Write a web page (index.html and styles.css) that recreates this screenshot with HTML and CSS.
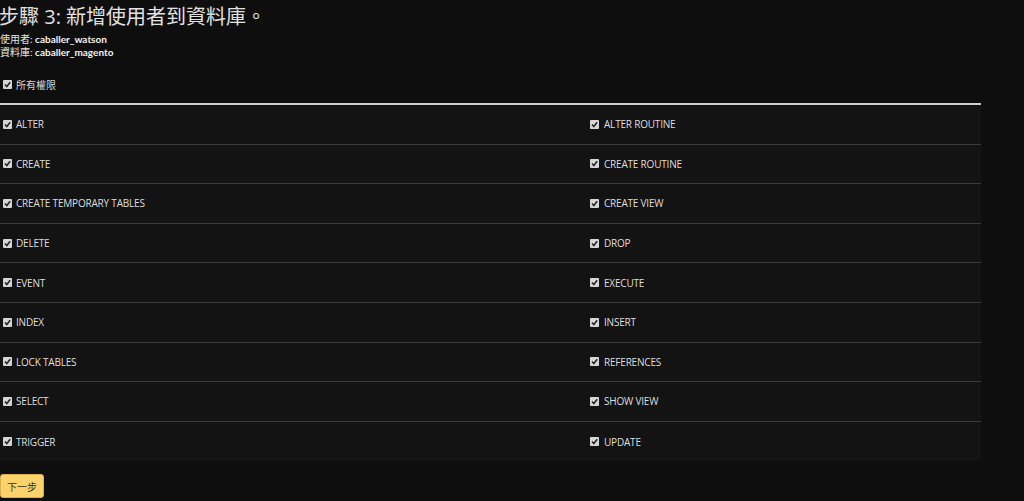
FILE: index.html
```html
<!DOCTYPE html>
<html lang="zh-Hant">
<head>
<meta charset="utf-8">
<title>步驟 3</title>
<link rel="stylesheet" href="styles.css">
</head>
<body>
<div class="page">
  <h1 class="title">步驟 3: 新增使用者到資料庫。</h1>
  <div class="info">
    <div>使用者: <b>caballer_watson</b></div>
    <div>資料庫: <b>caballer_magento</b></div>
  </div>
  <label class="all"><span class="cb"><svg viewBox="0 0 9 9"><rect x="0" y="0" width="9" height="9" rx="1" fill="#d6d6d6"/><path d="M2 4.6 L3.8 6.5 L7.2 2.2" fill="none" stroke="#222" stroke-width="1.5"/></svg></span>所有權限</label>
  <div class="table">
    <div class="row"><div class="cell"><span class="cb"><svg viewBox="0 0 9 9"><rect width="9" height="9" rx="1" fill="#d6d6d6"/><path d="M2 4.6 L3.8 6.5 L7.2 2.2" fill="none" stroke="#222" stroke-width="1.5"/></svg></span>ALTER</div><div class="cell"><span class="cb"><svg viewBox="0 0 9 9"><rect width="9" height="9" rx="1" fill="#d6d6d6"/><path d="M2 4.6 L3.8 6.5 L7.2 2.2" fill="none" stroke="#222" stroke-width="1.5"/></svg></span>ALTER ROUTINE</div></div>
    <div class="row"><div class="cell"><span class="cb"><svg viewBox="0 0 9 9"><rect width="9" height="9" rx="1" fill="#d6d6d6"/><path d="M2 4.6 L3.8 6.5 L7.2 2.2" fill="none" stroke="#222" stroke-width="1.5"/></svg></span>CREATE</div><div class="cell"><span class="cb"><svg viewBox="0 0 9 9"><rect width="9" height="9" rx="1" fill="#d6d6d6"/><path d="M2 4.6 L3.8 6.5 L7.2 2.2" fill="none" stroke="#222" stroke-width="1.5"/></svg></span>CREATE ROUTINE</div></div>
    <div class="row"><div class="cell"><span class="cb"><svg viewBox="0 0 9 9"><rect width="9" height="9" rx="1" fill="#d6d6d6"/><path d="M2 4.6 L3.8 6.5 L7.2 2.2" fill="none" stroke="#222" stroke-width="1.5"/></svg></span>CREATE TEMPORARY TABLES</div><div class="cell"><span class="cb"><svg viewBox="0 0 9 9"><rect width="9" height="9" rx="1" fill="#d6d6d6"/><path d="M2 4.6 L3.8 6.5 L7.2 2.2" fill="none" stroke="#222" stroke-width="1.5"/></svg></span>CREATE VIEW</div></div>
    <div class="row"><div class="cell"><span class="cb"><svg viewBox="0 0 9 9"><rect width="9" height="9" rx="1" fill="#d6d6d6"/><path d="M2 4.6 L3.8 6.5 L7.2 2.2" fill="none" stroke="#222" stroke-width="1.5"/></svg></span>DELETE</div><div class="cell"><span class="cb"><svg viewBox="0 0 9 9"><rect width="9" height="9" rx="1" fill="#d6d6d6"/><path d="M2 4.6 L3.8 6.5 L7.2 2.2" fill="none" stroke="#222" stroke-width="1.5"/></svg></span>DROP</div></div>
    <div class="row"><div class="cell"><span class="cb"><svg viewBox="0 0 9 9"><rect width="9" height="9" rx="1" fill="#d6d6d6"/><path d="M2 4.6 L3.8 6.5 L7.2 2.2" fill="none" stroke="#222" stroke-width="1.5"/></svg></span>EVENT</div><div class="cell"><span class="cb"><svg viewBox="0 0 9 9"><rect width="9" height="9" rx="1" fill="#d6d6d6"/><path d="M2 4.6 L3.8 6.5 L7.2 2.2" fill="none" stroke="#222" stroke-width="1.5"/></svg></span>EXECUTE</div></div>
    <div class="row"><div class="cell"><span class="cb"><svg viewBox="0 0 9 9"><rect width="9" height="9" rx="1" fill="#d6d6d6"/><path d="M2 4.6 L3.8 6.5 L7.2 2.2" fill="none" stroke="#222" stroke-width="1.5"/></svg></span>INDEX</div><div class="cell"><span class="cb"><svg viewBox="0 0 9 9"><rect width="9" height="9" rx="1" fill="#d6d6d6"/><path d="M2 4.6 L3.8 6.5 L7.2 2.2" fill="none" stroke="#222" stroke-width="1.5"/></svg></span>INSERT</div></div>
    <div class="row"><div class="cell"><span class="cb"><svg viewBox="0 0 9 9"><rect width="9" height="9" rx="1" fill="#d6d6d6"/><path d="M2 4.6 L3.8 6.5 L7.2 2.2" fill="none" stroke="#222" stroke-width="1.5"/></svg></span>LOCK TABLES</div><div class="cell"><span class="cb"><svg viewBox="0 0 9 9"><rect width="9" height="9" rx="1" fill="#d6d6d6"/><path d="M2 4.6 L3.8 6.5 L7.2 2.2" fill="none" stroke="#222" stroke-width="1.5"/></svg></span>REFERENCES</div></div>
    <div class="row"><div class="cell"><span class="cb"><svg viewBox="0 0 9 9"><rect width="9" height="9" rx="1" fill="#d6d6d6"/><path d="M2 4.6 L3.8 6.5 L7.2 2.2" fill="none" stroke="#222" stroke-width="1.5"/></svg></span>SELECT</div><div class="cell"><span class="cb"><svg viewBox="0 0 9 9"><rect width="9" height="9" rx="1" fill="#d6d6d6"/><path d="M2 4.6 L3.8 6.5 L7.2 2.2" fill="none" stroke="#222" stroke-width="1.5"/></svg></span>SHOW VIEW</div></div>
    <div class="row"><div class="cell"><span class="cb"><svg viewBox="0 0 9 9"><rect width="9" height="9" rx="1" fill="#d6d6d6"/><path d="M2 4.6 L3.8 6.5 L7.2 2.2" fill="none" stroke="#222" stroke-width="1.5"/></svg></span>TRIGGER</div><div class="cell"><span class="cb"><svg viewBox="0 0 9 9"><rect width="9" height="9" rx="1" fill="#d6d6d6"/><path d="M2 4.6 L3.8 6.5 L7.2 2.2" fill="none" stroke="#222" stroke-width="1.5"/></svg></span>UPDATE</div></div>
  </div>
  <button class="next" type="button">下一步</button>
</div>
</body>
</html>
```

FILE: styles.css
```css
html, body {
  margin: 0;
  padding: 0;
  background: #0e0e0e;
}
body {
  font-family: "Open Sans", "Noto Sans CJK TC", sans-serif;
  color: #dcdcdc;
  width: 1024px;
  height: 501px;
  overflow: hidden;
}
.page {
  display: flex;
  flex-direction: column;
  align-items: flex-start;
}
.title {
  margin: 2px 0 0 -1px;
  font-family: "Open Sans", "Noto Sans CJK TC", sans-serif;
  font-weight: normal;
  font-size: 20px;
  line-height: 30px;
  color: #e2e2e2;
}
.info {
  margin: 1px 0 0 0;
  font-family: Lato, "Noto Sans CJK TC", sans-serif;
  font-size: 10px;
  line-height: 13px;
  color: #e6e6e6;
}
.info b {
  font-weight: bold;
  color: #f2f2f2;
}
.cb {
  display: inline-flex;
  width: 9px;
  height: 9px;
  margin-right: 4px;
  flex: none;
}
.cb svg {
  width: 9px;
  height: 9px;
  display: block;
}
.all {
  display: flex;
  align-items: center;
  margin: 17px 0 0 3px;
  height: 16px;
  font-size: 10px;
  color: #d8d8d8;
}
.table {
  margin-top: 11px;
  width: 981px;
  background: #131313;
  border-top: 2px solid #cfcfcf;
}
.row {
  display: grid;
  grid-template-columns: 588px 1fr;
  height: 38.6px;
  border-bottom: 1px solid #3c3c3c;
}
.row:last-child {
  border-bottom: none;
  height: 39.5px;
}
.cell {
  display: flex;
  align-items: center;
  padding-left: 3px;
  font-size: 10px;
  letter-spacing: -0.2px;
  color: #dedede;
  white-space: nowrap;
}
.cell + .cell {
  padding-left: 2px;
}
.cell + .cell .cb {
  margin-right: 5px;
}
.next {
  margin-top: 13px;
  margin-left: 0;
  height: 24px;
  width: 44px;
  padding: 0;
  background: #fcd26b;
  border: 1px solid #d9ae50;
  border-radius: 3px;
  font-family: "Noto Sans CJK TC", sans-serif;
  font-size: 10px;
  color: #3a2e14;
}
```
